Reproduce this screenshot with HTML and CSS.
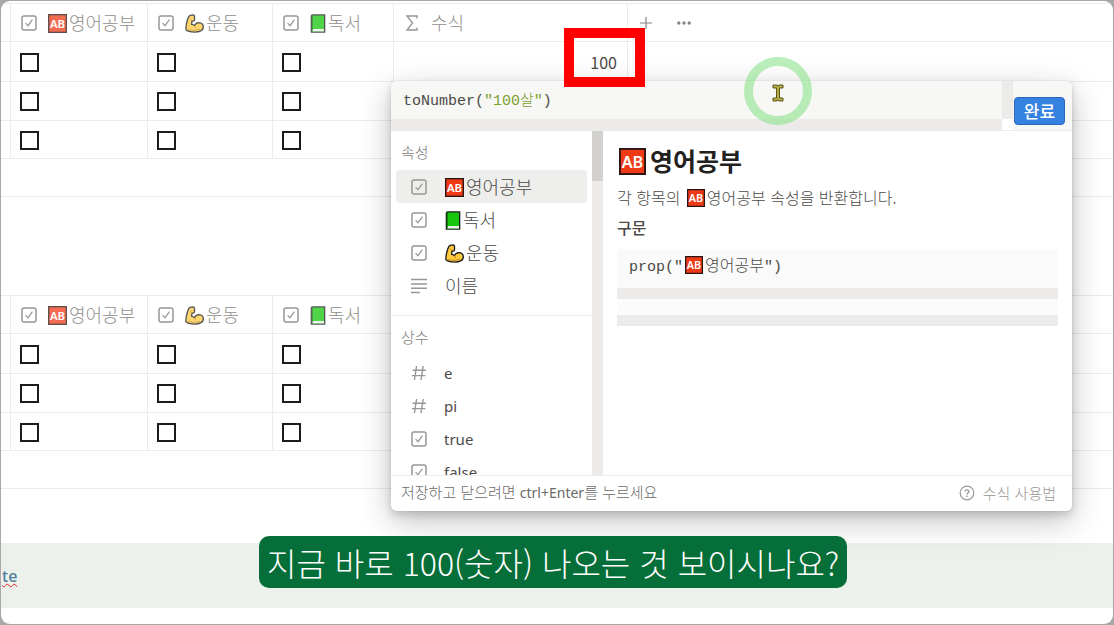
FILE: index.html
```html
<!DOCTYPE html>
<html lang="ko">
<head>
  <meta charset="UTF-8">
  <meta name="viewport" content="width=device-width, initial-scale=1.0">
  <title>수식</title>
  <link rel="stylesheet" href="styles.css">
</head>
<body>
  <!-- shared icons -->
  <svg class="sprite" aria-hidden="true">
    <symbol id="check" viewBox="0 0 16 16">
      <rect x="1" y="1" width="14" height="14" rx="2" fill="none" stroke="currentColor" stroke-width="1.5"/>
      <path d="M4.6 8.2l2.4 2.5 4.4-6" fill="none" stroke="currentColor" stroke-width="1.2"/>
    </symbol>
    <symbol id="lines" viewBox="0 0 16 16">
      <path d="M0 1.5h16M0 5.9h16M0 10.2h16M0 14.5h9" stroke="currentColor" stroke-width="1.5"/>
    </symbol>
    <symbol id="hash" viewBox="0 0 16 16">
      <path d="M5.6 1L3.4 15M12.2 1L10 15M1.5 5.2h13.5M.8 10.6h13.5" stroke="currentColor" stroke-width="1.4"/>
    </symbol>
    <symbol id="ab" viewBox="0 0 20 20">
      <rect x=".7" y=".7" width="18.6" height="18.6" fill="#f03a17" stroke="#2b1512" stroke-width="1.4"/>
      <text x="10" y="14.6" class="ab-text">AB</text>
    </symbol>
    <symbol id="book" viewBox="0 0 16 20">
      <path d="M1 2.5Q1 1 2.5 1H15v18H1z" fill="#16c60c" stroke="#1b1b1b" stroke-width="1.4"/>
      <path d="M2 15.8h12.3v2.5H2z" fill="#e8f5e6"/>
      <path d="M2 1.7v16" stroke="#0c7a08" stroke-width="1.2"/>
    </symbol>
    <symbol id="arm" viewBox="0 0 20 20">
      <path d="M5.500 1.500L8.500 1Q10 1 10 2.500V6Q10 7.500 8.500 7.500H7.300L7 11Q8.600 11.200 10 12.200 11.500 9 14.600 9 19.300 9.300 19.300 13.800 19 18.900 10 19 3 19 1 16.500 .6 12.500 2.800 5.500 3.800 2 5.500 1.500z" fill="#ffc83d" stroke="#1b1b1b" stroke-width="1.400" stroke-linejoin="round"/>
      <path d="M10 12.200q1 1.200 .8 2.800M5.500 5l2 2.500M3 16.500q7 2 13-.5" fill="none" stroke="#b3761b" stroke-width=".8"/>
    </symbol>
  </svg>

  <main class="window">
    <table class="db">
      <colgroup>
        <col class="col-edge"><col class="col-english"><col class="col-sport"><col class="col-book"><col class="col-formula"><col>
      </colgroup>
      <thead>
        <tr>
          <th></th>
          <th><div class="head"><svg class="type"><use href="#check"/></svg><span class="name"><svg class="emoji"><use href="#ab"/></svg>영어공부</span></div></th>
          <th><div class="head"><svg class="type"><use href="#check"/></svg><span class="name"><svg class="emoji"><use href="#arm"/></svg>운동</span></div></th>
          <th><div class="head"><svg class="type"><use href="#check"/></svg><span class="name"><svg class="emoji emoji-book"><use href="#book"/></svg>독서</span></div></th>
          <th><div class="head"><svg class="type" viewBox="0 0 16 16"><path d="M13 3.500V1H3l5.500 7L3 15h10v-2.500" fill="none" stroke="currentColor" stroke-width="1.400"/></svg><span class="name">수식</span></div></th>
          <th class="last">
            <div class="head head-tools">
              <button class="tool" aria-label="속성 추가"><svg viewBox="0 0 14 14"><path d="M7 1v12M1 7h12" stroke="currentColor" stroke-width="1.200"/></svg></button>
              <button class="tool" aria-label="더 보기"><svg viewBox="0 0 14 14"><g fill="currentColor"><circle cx="1.800" cy="7" r="1.700"/><circle cx="7" cy="7" r="1.700"/><circle cx="12.200" cy="7" r="1.700"/></g></svg></button>
            </div>
          </th>
        </tr>
      </thead>
      <tbody>
        <tr>
          <td></td>
          <td><input type="checkbox" aria-label="영어공부"></td>
          <td><input type="checkbox" aria-label="운동"></td>
          <td><input type="checkbox" aria-label="독서"></td>
          <td class="number">100</td>
          <td class="last"></td>
        </tr>
        <tr>
          <td></td>
          <td><input type="checkbox" aria-label="영어공부"></td>
          <td><input type="checkbox" aria-label="운동"></td>
          <td><input type="checkbox" aria-label="독서"></td>
          <td></td>
          <td class="last"></td>
        </tr>
        <tr>
          <td></td>
          <td><input type="checkbox" aria-label="영어공부"></td>
          <td><input type="checkbox" aria-label="운동"></td>
          <td><input type="checkbox" aria-label="독서"></td>
          <td></td>
          <td class="last"></td>
        </tr>
      </tbody>
      <tfoot>
        <tr><td class="last" colspan="6"></td></tr>
      </tfoot>
    </table>

    <table class="db">
      <colgroup>
        <col class="col-edge"><col class="col-english"><col class="col-sport"><col class="col-book"><col>
      </colgroup>
      <thead>
        <tr>
          <th></th>
          <th><div class="head"><svg class="type"><use href="#check"/></svg><span class="name"><svg class="emoji"><use href="#ab"/></svg>영어공부</span></div></th>
          <th><div class="head"><svg class="type"><use href="#check"/></svg><span class="name"><svg class="emoji"><use href="#arm"/></svg>운동</span></div></th>
          <th><div class="head"><svg class="type"><use href="#check"/></svg><span class="name"><svg class="emoji emoji-book"><use href="#book"/></svg>독서</span></div></th>
          <th class="last"></th>
        </tr>
      </thead>
      <tbody>
        <tr>
          <td></td>
          <td><input type="checkbox" aria-label="영어공부"></td>
          <td><input type="checkbox" aria-label="운동"></td>
          <td><input type="checkbox" aria-label="독서"></td>
          <td class="last"></td>
        </tr>
        <tr>
          <td></td>
          <td><input type="checkbox" aria-label="영어공부"></td>
          <td><input type="checkbox" aria-label="운동"></td>
          <td><input type="checkbox" aria-label="독서"></td>
          <td class="last"></td>
        </tr>
        <tr>
          <td></td>
          <td><input type="checkbox" aria-label="영어공부"></td>
          <td><input type="checkbox" aria-label="운동"></td>
          <td><input type="checkbox" aria-label="독서"></td>
          <td class="last"></td>
        </tr>
      </tbody>
      <tfoot>
        <tr><td class="last" colspan="5"></td></tr>
      </tfoot>
    </table>

    <footer class="band"><span class="misspelt">te</span></footer>

    <!-- formula popup -->
    <section class="popup">
      <div class="editor">
        <div class="editor-field">
          <div class="editor-input" role="textbox" contenteditable="true" spellcheck="false" aria-label="수식">toNumber(<span class="string">"100살"</span>)</div>
          <div class="track-x"></div>
        </div>
        <div class="track-y"></div>
        <div class="editor-side"><button class="done">완료</button></div>
      </div>

      <div class="popup-body">
        <nav class="sidebar">
          <h3 class="group">속성</h3>
          <ul class="list">
            <li class="item selected"><svg class="type"><use href="#check"/></svg><span class="name"><svg class="emoji"><use href="#ab"/></svg>영어공부</span></li>
            <li class="item"><svg class="type"><use href="#check"/></svg><span class="name"><svg class="emoji emoji-book"><use href="#book"/></svg>독서</span></li>
            <li class="item"><svg class="type"><use href="#check"/></svg><span class="name"><svg class="emoji"><use href="#arm"/></svg>운동</span></li>
            <li class="item"><svg class="type"><use href="#lines"/></svg><span class="name">이름</span></li>
          </ul>
          <h3 class="group">상수</h3>
          <ul class="list">
            <li class="item latin"><svg class="type"><use href="#hash"/></svg>e</li>
            <li class="item latin"><svg class="type"><use href="#hash"/></svg>pi</li>
            <li class="item latin"><svg class="type"><use href="#check"/></svg>true</li>
            <li class="item latin"><svg class="type"><use href="#check"/></svg>false</li>
          </ul>
        </nav>
        <div class="scrollbar"><div class="thumb"></div></div>
        <article class="detail">
          <h2 class="title"><svg class="emoji emoji-large"><use href="#ab"/></svg>영어공부</h2>
          <p class="desc">각 항목의 <svg class="emoji emoji-small"><use href="#ab"/></svg>영어공부 속성을 반환합니다.</p>
          <h4 class="syntax">구문</h4>
          <div class="code"><code>prop("<svg class="emoji emoji-small"><use href="#ab"/></svg><span class="code-name">영어공부</span>")</code></div>
          <div class="track-x"></div>
          <div class="code-empty"></div>
          <div class="track-x"></div>
        </article>
      </div>

      <div class="popup-foot">
        <span>저장하고 닫으려면 <kbd>ctrl+Enter</kbd>를 누르세요</span>
        <a class="help" href="#"><svg viewBox="0 0 16 16"><circle cx="8" cy="8" r="6.800" fill="none" stroke="currentColor" stroke-width="1.200"/><path d="M6 6.600C6 4.200 10 4.200 10 6.500 10 7.900 8 7.900 8 9.400M8 10.500v1.400" fill="none" stroke="currentColor" stroke-width="1.300"/></svg>수식 사용법</a>
      </div>
    </section>

    <div class="highlight"></div>

    <div class="pointer">
      <svg viewBox="0 0 12 18"><path d="M1 1h4l1 1 1-1h4v3H7.500v10H11v3H7l-1-1-1 1H1v-3h3.500V4H1z" fill="#b5ab48" stroke="#5c5718" stroke-width="1"/></svg>
    </div>

    <p class="caption">지금 바로 100(숫자) 나오는 것 보이시나요?</p>
  </main>
</body>
</html>
```

FILE: styles.css
```css
:root {
  --line: #ececeb;
  --track: #ecebea;
  --muted: #8f8e8b;
  --text: #4b4a47;
  --sans: "Noto Sans CJK KR", "Noto Sans", sans-serif;
  --mono: "Liberation Mono", "Noto Sans CJK KR", monospace;
}

* {
  box-sizing: border-box;
}

body {
  margin: 0;
  padding: 1px;
  min-height: 100vh;
  display: flex;
  background: #a9a8a9;
  font-family: var(--sans);
  font-weight: 300;
  color: var(--text);
}

h2, h3, h4, p, ul {
  margin: 0;
  padding: 0;
}

.sprite {
  position: absolute;
  width: 0;
  height: 0;
}

.window {
  position: relative;
  flex: 1;
  padding-top: 2px;
  border-radius: 9px;
  background: #fff;
  overflow: hidden;
}

/* tables */
.db {
  width: 100%;
  table-layout: fixed;
  border-collapse: separate;
  border-spacing: 0;
  margin-bottom: 98px;
}

.db + .db {
  margin-bottom: 54px;
}

.col-edge { width: 10px; }
.col-english { width: 137px; }
.col-sport { width: 125px; }
.col-book { width: 121px; }
.col-formula { width: 234px; }

.db th,
.db td {
  height: 39px;
  padding: 0;
  border-right: 1px solid var(--line);
  border-bottom: 1px solid var(--line);
  font-weight: 300;
  text-align: left;
}

.db th {
  border-top: 1px solid var(--line);
  color: var(--muted);
}

.db tbody tr:first-child td {
  height: 40px;
}

.db tbody tr:last-child td,
.db tfoot td {
  height: 38px;
}

.db .last {
  border-right: none;
}

.db .number {
  padding-right: 10px;
  font-size: 16px;
  font-weight: 400;
  line-height: 22px;
  text-align: right;
}

.db input {
  appearance: none;
  display: block;
  width: 19px;
  height: 19px;
  margin: 1px 0 0 9px;
  border: 2px solid #1c1c1c;
  background: #fff;
}

.head {
  display: flex;
  align-items: center;
  gap: 11px;
  padding-left: 10px;
  font-size: 18px;
  line-height: 24px;
}

.head .emoji {
  opacity: 0.75;
}

.head-tools {
  gap: 24px;
  padding-left: 11px;
}

.tool {
  display: flex;
  padding: 0;
  border: none;
  background: none;
  color: #85847f;
}

.tool svg {
  width: 14px;
  height: 14px;
}

.type {
  flex: none;
  width: 16px;
  height: 16px;
  color: #989794;
}

.name {
  display: flex;
  align-items: center;
  gap: 2px;
  padding-bottom: 2px;
}

.emoji {
  flex: none;
  width: 19px;
  height: 19px;
}

.name .emoji {
  margin-top: 4px;
}

.emoji-book {
  width: 16px;
}

.emoji-small {
  width: 18px;
  height: 18px;
  margin: 0 2px;
  vertical-align: -3px;
}

.emoji-large {
  width: 27px;
  height: 27px;
  margin-top: 2px;
}

.ab-text {
  font: 600 12px "Noto Sans", sans-serif;
  fill: #fff;
  text-anchor: middle;
}

.band {
  display: flex;
  align-items: center;
  height: 65px;
  background: #ecf1eb;
}

.misspelt {
  padding-left: 1px;
  font: 500 16px/24px "Noto Sans", sans-serif;
  color: #4d7f9c;
  text-decoration: underline wavy #d22 1px;
}

/* popup */
.popup {
  position: absolute;
  top: 80px;
  left: 390px;
  right: 41px;
  border-radius: 5px;
  background: #fff;
  box-shadow: 0 0 1px rgba(0, 0, 0, 0.3), 0 4px 8px rgba(0, 0, 0, 0.14), 0 10px 32px rgba(0, 0, 0, 0.24);
  overflow: hidden;
}

.editor {
  display: flex;
  height: 50px;
  border-bottom: 1px solid var(--line);
}

.editor-field {
  flex: 1;
  display: flex;
  flex-direction: column;
}

.editor-input {
  flex: 1;
  padding: 10px 12px 6px;
  background: #f7f7f5;
  font-family: var(--mono);
  font-size: 15px;
  line-height: 22px;
  outline: none;
}

.string {
  color: #7c9f2c;
}

.track-x {
  height: 11px;
  background: var(--track);
}

.track-y {
  width: 11px;
  margin-bottom: 11px;
  background: var(--track);
}

.editor-side {
  display: flex;
  align-items: center;
  padding: 10px 7px 0 1px;
  background: #f7f7f5;
}

.done {
  width: 51px;
  height: 28px;
  padding: 0;
  border: 1px solid #2a68bb;
  border-radius: 4px;
  background: #3682e0;
  color: #fff;
  font: 500 17px/20px var(--sans);
}

.popup-body {
  display: flex;
  height: 344px;
}

.sidebar {
  width: 201px;
  overflow: hidden;
}

.group {
  padding: 10px 10px 7px;
  font-size: 15px;
  font-weight: 300;
  line-height: 22px;
  color: #7d7c78;
}

.list {
  padding: 0 5px 13px;
  list-style: none;
}

.list + .group {
  border-top: 1px solid var(--line);
}

.item {
  display: flex;
  align-items: center;
  gap: 18px;
  height: 33px;
  padding-left: 15px;
  border-radius: 4px;
  font-size: 18px;
  line-height: 24px;
}

.item.selected {
  background: #eeeeed;
}

.item.latin {
  gap: 17px;
  padding-top: 2px;
  font-family: "Noto Sans", sans-serif;
  font-size: 15px;
  font-weight: 400;
}

.scrollbar {
  width: 11px;
  background: var(--track);
}

.thumb {
  height: 50px;
  background: #d2d1cd;
}

.detail {
  flex: 1;
  padding: 10px 14px;
}

.title {
  display: flex;
  align-items: center;
  gap: 4px;
  padding-left: 2px;
  font-size: 25px;
  font-weight: 700;
  line-height: 38px;
  color: #22211e;
}

.desc {
  padding-top: 6px;
  font-size: 16px;
  line-height: 24px;
}

.syntax {
  padding: 6px 0 10px;
  font-size: 16px;
  font-weight: 500;
  line-height: 24px;
}

.code {
  padding: 3px 12px 8px;
  background: #fafafa;
  line-height: 24px;
}

.code code {
  font-family: var(--mono);
  font-size: 15px;
}

.code-name {
  font-size: 16px;
}

.code-empty {
  height: 16px;
  background: #fbfbfb;
}

.popup-foot {
  display: flex;
  align-items: center;
  justify-content: space-between;
  height: 36px;
  padding: 0 16px 2px 10px;
  border-top: 1px solid var(--line);
  font-size: 15px;
  line-height: 20px;
  color: #6b6a67;
}

.popup-foot kbd {
  font: 400 14px/20px "Noto Sans", sans-serif;
}

.help {
  display: flex;
  align-items: center;
  gap: 8px;
  color: #999894;
  text-decoration: none;
}

.help svg {
  width: 16px;
  height: 16px;
}

/* overlays */
.highlight {
  position: absolute;
  top: 27px;
  left: 563px;
  width: 81px;
  height: 59px;
  border: 10px solid #fe0000;
}

.pointer {
  position: absolute;
  top: 56px;
  left: 743px;
  display: flex;
  align-items: center;
  justify-content: center;
  width: 68px;
  height: 68px;
  border: 9px solid rgba(140, 226, 140, 0.6);
  border-radius: 50%;
}

.pointer svg {
  width: 12px;
  height: 18px;
  margin-top: 4px;
}

.caption {
  position: absolute;
  bottom: 36px;
  left: 258px;
  padding: 4px 8px;
  border-radius: 10px;
  background: #066e38;
  color: #fff;
  font-size: 32px;
  font-weight: 300;
  line-height: 44px;
  white-space: nowrap;
}
```
